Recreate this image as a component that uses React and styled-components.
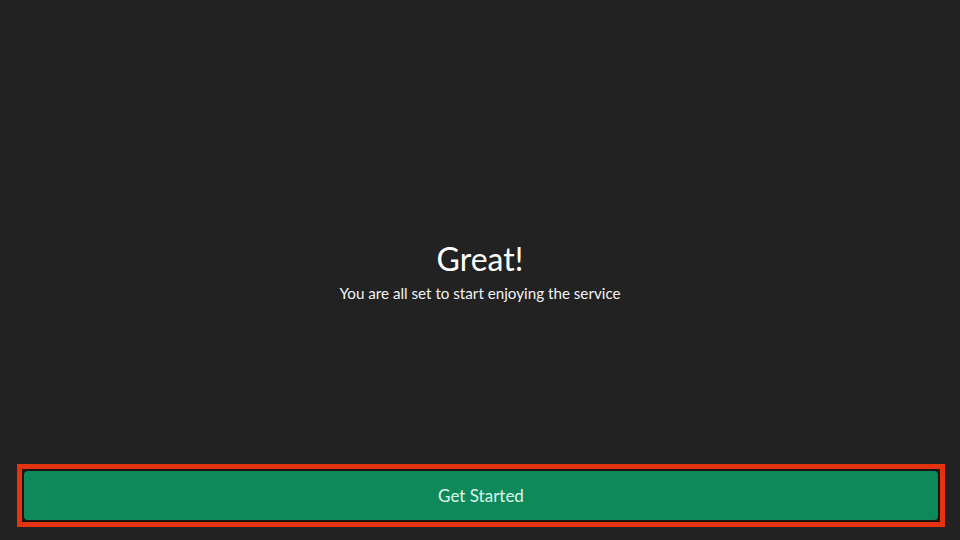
import React from "react";
import styled, { createGlobalStyle } from "styled-components";

const GlobalStyle = createGlobalStyle`
  html, body {
    margin: 0;
    padding: 0;
    background: #222222;
  }
  body {
    font-family: Lato, "Liberation Sans", sans-serif;
  }
`;

const Screen = styled.div`
  width: 960px;
  height: 540px;
  display: flex;
  flex-direction: column;
  background: #222222;
  color: #ffffff;
`;

const Content = styled.main`
  flex: 1;
  display: flex;
  flex-direction: column;
  align-items: center;
  justify-content: center;
  padding-top: 80px;
`;

const Title = styled.h1`
  margin: 0;
  font-size: 32px;
  font-weight: 400;
  line-height: 36px;
`;

const Subtitle = styled.p`
  margin: 6px 0 0;
  font-size: 15.2px;
  line-height: 20px;
  color: #f2f2f2;
`;

const Footer = styled.footer`
  padding: 0 15px 13px 17px;
`;

const FocusRing = styled.div`
  border: 5px solid #e5330f;
  padding: 2px;
  background: #1c1412;
`;

const Button = styled.button`
  display: block;
  width: 100%;
  height: 49px;
  border: none;
  border-radius: 4px;
  background: #0e8a5a;
  color: #dff7ea;
  font-family: Lato, "Liberation Sans", sans-serif;
  font-size: 17px;
  cursor: pointer;
`;

export default function App() {
  return (
    <>
      <GlobalStyle />
      <Screen>
        <Content>
          <Title>Great!</Title>
          <Subtitle>You are all set to start enjoying the service</Subtitle>
        </Content>
        <Footer>
          <FocusRing>
            <Button>Get Started</Button>
          </FocusRing>
        </Footer>
      </Screen>
    </>
  );
}
